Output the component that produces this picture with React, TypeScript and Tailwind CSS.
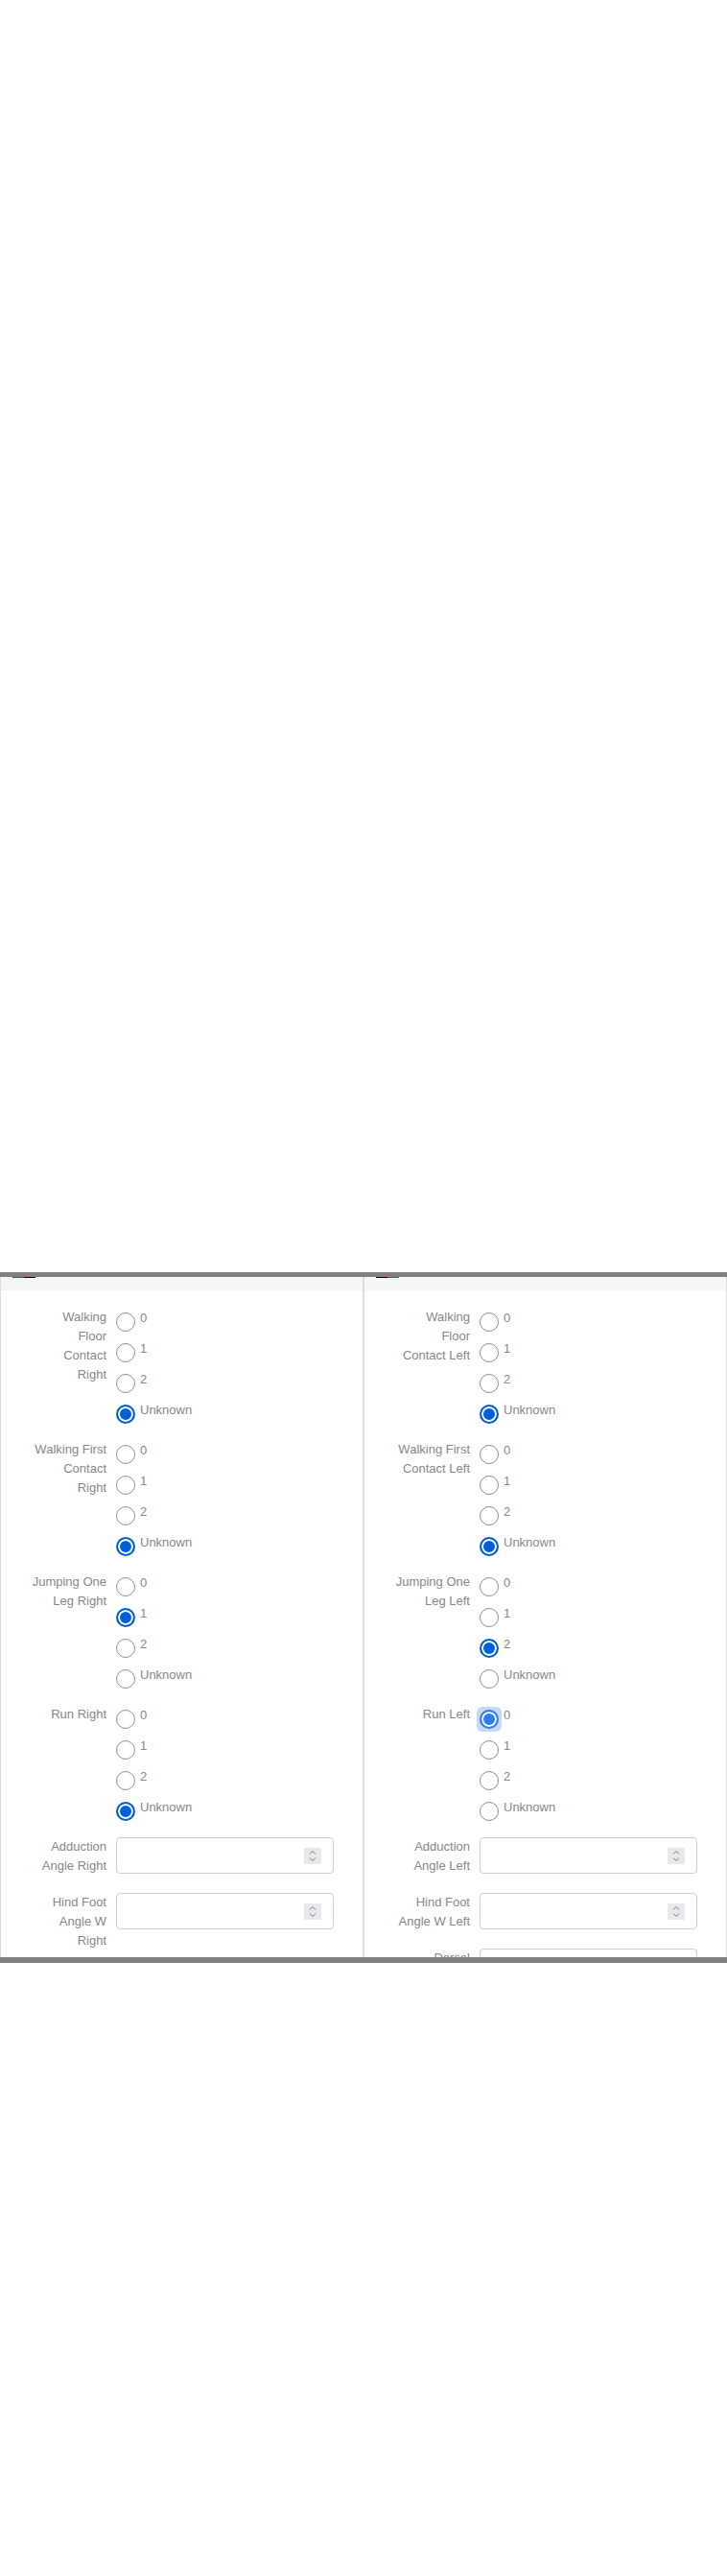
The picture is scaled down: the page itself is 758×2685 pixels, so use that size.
import React from 'react';

type Field =
  | { kind: 'radio'; name: string; label: string; value: string; focus?: boolean }
  | { kind: 'number'; name: string; label: string };

const OPTIONS = ['0', '1', '2', 'Unknown'];

const LEFT: Field[] = [
  { kind: 'radio', name: 'walking_floor_contact_right', label: 'Walking Floor Contact Right', value: 'Unknown' },
  { kind: 'radio', name: 'walking_first_contact_right', label: 'Walking First Contact Right', value: 'Unknown' },
  { kind: 'radio', name: 'jumping_one_leg_right', label: 'Jumping One Leg Right', value: '1' },
  { kind: 'radio', name: 'run_right', label: 'Run Right', value: 'Unknown' },
  { kind: 'number', name: 'adduction_angle_right', label: 'Adduction Angle Right' },
  { kind: 'number', name: 'hind_foot_angle_w_right', label: 'Hind Foot Angle W Right' },
  { kind: 'number', name: 'dorsal_flexion_right', label: 'Dorsal Flexion Right' },
];

const RIGHT: Field[] = [
  { kind: 'radio', name: 'walking_floor_contact_left', label: 'Walking Floor Contact Left', value: 'Unknown' },
  { kind: 'radio', name: 'walking_first_contact_left', label: 'Walking First Contact Left', value: 'Unknown' },
  { kind: 'radio', name: 'jumping_one_leg_left', label: 'Jumping One Leg Left', value: '2' },
  { kind: 'radio', name: 'run_left', label: 'Run Left', value: '0', focus: true },
  { kind: 'number', name: 'adduction_angle_left', label: 'Adduction Angle Left' },
  { kind: 'number', name: 'hind_foot_angle_w_left', label: 'Hind Foot Angle W Left' },
  { kind: 'number', name: 'dorsal_flexion_left', label: 'Dorsal Flexion Left' },
];

function Spinner() {
  return (
    <span className="flex h-[17px] w-[18px] items-center justify-center bg-[#e9e9ed]">
      <svg width="10" height="13" viewBox="0 0 10 13" fill="none" stroke="#777" strokeWidth="1">
        <path d="M2 4.5 L5 1.5 L8 4.5" />
        <path d="M2 8.5 L5 11.5 L8 8.5" />
      </svg>
    </span>
  );
}

function RadioOption({ name, option, checked, focus }: { name: string; option: string; checked: boolean; focus?: boolean }) {
  return (
    <label className="flex h-[32px] items-start">
      <span className="relative mt-[5px] flex">
        {focus && <span className="absolute -inset-[3px] rounded-[6px] bg-[#c5dafb]" />}
        <input
          type="radio"
          name={name}
          defaultChecked={checked}
          className={
            focus
              ? 'relative m-0 h-[20px] w-[20px] shrink-0 appearance-none rounded-full border border-[#8f8f8f] bg-white checked:border-2 checked:border-[#2c7cf6] checked:bg-[#2c7cf6] checked:shadow-[inset_0_0_0_2px_#fff]'
              : 'relative m-0 h-[20px] w-[20px] shrink-0 appearance-none rounded-full border border-[#8f8f8f] bg-white checked:border-2 checked:border-[#005fdb] checked:bg-[#005fdb] checked:shadow-[inset_0_0_0_2px_#fff]'
          }
        />
      </span>
      <span className="ml-[5px] pt-[1px] text-[13px] leading-[20px] text-[#888]">{option}</span>
    </label>
  );
}

function Row({ field }: { field: Field }) {
  return (
    <div className="mb-[10px] flex items-start">
      <div className="ml-[32px] w-[78px] shrink-0 text-right text-[13px] leading-[20px] text-[#888]">{field.label}</div>
      <div className="ml-[10px]">
        {field.kind === 'radio' ? (
          OPTIONS.map(o => (
            <RadioOption key={o} name={field.name} option={o} checked={o === field.value} focus={field.focus && o === field.value} />
          ))
        ) : (
          <div className="mb-[10px] flex h-[38px] w-[227px] items-center justify-end rounded-[4px] border border-[#cfcfcf] bg-white pr-[12px]">
            <Spinner />
          </div>
        )}
      </div>
    </div>
  );
}

function Column({ fields, flip }: { fields: Field[]; flip?: boolean }) {
  return (
    <div className="border-x border-[#dcdcdc] bg-white">
      <div className="h-[14px] bg-[#f6f6f6] pl-[12px]">
        <div className="flex h-px w-[24px]">
          <span className={flip ? 'flex-1 bg-black' : 'flex-1 bg-[#e5141a]'} />
          <span className={flip ? 'flex-1 bg-[#e5141a]' : 'flex-1 bg-black'} />
        </div>
      </div>
      <div className="pt-[18px]">
        {fields.map(f => (
          <Row key={f.name} field={f} />
        ))}
      </div>
    </div>
  );
}

export default function App() {
  return (
    <div className="min-h-screen bg-white pt-[1326px] font-['Liberation_Sans',Arial,sans-serif]">
      <div className="grid h-[720px] grid-cols-2 overflow-hidden border-b-[6px] border-t-[5px] border-[#808080]">
        <Column fields={LEFT} />
        <Column fields={RIGHT} flip />
      </div>
    </div>
  );
}
